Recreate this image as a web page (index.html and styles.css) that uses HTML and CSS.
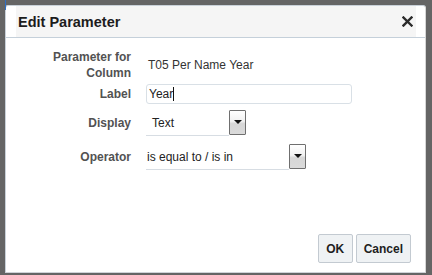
FILE: index.html
```html
<!DOCTYPE html>
<html lang="en">
<head>
<meta charset="utf-8">
<title>Edit Parameter</title>
<link rel="stylesheet" href="styles.css">
</head>
<body>
<div class="focus-mark"></div>
<div class="dialog">
  <div class="header">
    <div class="title-bar">
      <span class="title">Edit Parameter</span>
      <svg class="close" width="11" height="11" viewBox="0 0 11 11" aria-label="Close">
        <path d="M1.5 1.5 L9.5 9.5 M9.5 1.5 L1.5 9.5" stroke="#2b2b2b" stroke-width="2.4" stroke-linecap="square"/>
      </svg>
    </div>
  </div>
  <div class="form">
    <div class="row row-column">
      <div class="label">Parameter for<br>Column</div>
      <div class="value text-value">T05 Per Name Year</div>
    </div>
    <div class="row row-label">
      <div class="label">Label</div>
      <div class="value">
        <div class="text-input">Year<span class="caret"></span></div>
      </div>
    </div>
    <div class="row row-display">
      <div class="label">Display</div>
      <div class="value">
        <div class="select select-short">
          <span class="select-value pad-wide">Text</span>
          <span class="select-btn"><span class="arrow"></span></span>
        </div>
      </div>
    </div>
    <div class="row row-operator">
      <div class="label">Operator</div>
      <div class="value">
        <div class="select select-long">
          <span class="select-value pad-narrow">is equal to / is in</span>
          <span class="select-btn"><span class="arrow"></span></span>
        </div>
      </div>
    </div>
  </div>
  <div class="footer">
    <button class="btn">OK</button>
    <button class="btn">Cancel</button>
  </div>
</div>
</body>
</html>
```

FILE: styles.css
```css
html, body {
  margin: 0;
  padding: 0;
}
body {
  width: 432px;
  height: 275px;
  background: #656565;
  padding: 5px 0 0 5px;
  box-sizing: border-box;
  font-family: "Liberation Sans", Arial, sans-serif;
  font-size: 12px;
  color: #333;
  position: relative;
  overflow: hidden;
}
.focus-mark {
  position: absolute;
  left: 5px;
  top: 0;
  width: 1px;
  height: 10px;
  background: #2f6fc4;
}
.dialog {
  width: 421px;
  height: 268px;
  box-sizing: border-box;
  background: #fff;
  border: 1px solid #c9d1d9;
  border-right-color: #d6d6d6;
  border-bottom-color: #cfd3d8;
  border-radius: 3px 3px 0 0;
  display: flex;
  flex-direction: column;
}
.header {
  height: 32px;
  box-sizing: border-box;
  border-bottom: 1px solid #c5d0da;
  padding: 0 9px 0 10px;
  display: flex;
}
.title-bar {
  flex: 1;
  background: #f5f5f5;
  display: flex;
  align-items: center;
  justify-content: space-between;
  padding: 0 3px 0 2px;
}
.title {
  font-size: 14.5px;
  font-weight: bold;
  color: #1c1c1c;
}
.close {
  display: block;
}
.form {
  flex: 1;
  display: flex;
  flex-direction: column;
  padding-top: 11px;
}
.row {
  display: flex;
  align-items: center;
  gap: 15px;
}
.label {
  width: 125px;
  flex: none;
  text-align: right;
  font-weight: bold;
  color: #525252;
  line-height: 16px;
}
.row-column {
  height: 32px;
}
.row-label {
  height: 20px;
  margin-top: 3px;
}
.row-display {
  height: 26px;
  margin-top: 6px;
}
.row-operator {
  height: 26px;
  margin-top: 8px;
}
.text-value {
  padding-left: 2px;
  color: #333;
}
.text-input {
  width: 206px;
  height: 20px;
  box-sizing: border-box;
  border: 1px solid #d9e0e6;
  border-radius: 3px;
  padding: 0 2px;
  line-height: 18px;
  color: #222;
  display: flex;
  align-items: center;
}
.caret {
  display: inline-block;
  width: 1px;
  height: 14px;
  background: #111;
}
.select {
  display: flex;
  align-items: flex-start;
  height: 26px;
}
.select-value {
  height: 26px;
  box-sizing: border-box;
  border-bottom: 1px solid #d7dde3;
  display: flex;
  align-items: center;
  color: #222;
}
.select-short .select-value {
  width: 83px;
}
.select-long .select-value {
  width: 143px;
}
.pad-wide {
  padding-left: 6px;
}
.pad-narrow {
  padding-left: 1px;
}
.select-btn {
  width: 17px;
  height: 25px;
  box-sizing: border-box;
  border: 1px solid #6f6f6f;
  border-radius: 1px;
  background: linear-gradient(#ffffff 0%, #f1f1f1 45%, #d6d6d6 55%, #dadada 100%);
  display: flex;
  align-items: center;
  justify-content: center;
}
.arrow {
  width: 0;
  height: 0;
  border-left: 4px solid transparent;
  border-right: 4px solid transparent;
  border-top: 4px solid #111;
  margin-top: -1px;
}
.footer {
  display: flex;
  justify-content: flex-end;
  gap: 3px;
  padding: 0 14px 9px 0;
}
.btn {
  height: 29px;
  min-width: 35px;
  padding: 0 7px;
  box-sizing: border-box;
  border: 1px solid #c3cad1;
  border-radius: 2px;
  background: #eff2f4;
  font-family: "Liberation Sans", Arial, sans-serif;
  font-size: 12px;
  font-weight: bold;
  color: #1e1e1e;
}
```
